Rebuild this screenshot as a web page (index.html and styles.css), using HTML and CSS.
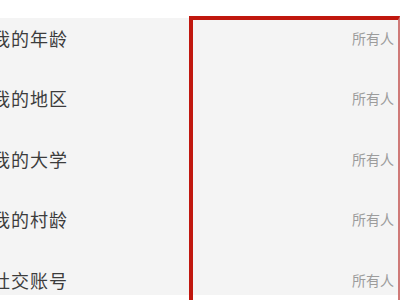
FILE: index.html
```html
<!DOCTYPE html>
<html lang="zh">
<head>
<meta charset="utf-8">
<link rel="stylesheet" href="styles.css">
</head>
<body>
<div class="panel">
  <ul class="list">
    <li class="row"><span class="label">我的年龄</span><span class="value">所有人</span></li>
    <li class="row"><span class="label">我的地区</span><span class="value">所有人</span></li>
    <li class="row"><span class="label">我的大学</span><span class="value">所有人</span></li>
    <li class="row"><span class="label">我的村龄</span><span class="value">所有人</span></li>
    <li class="row"><span class="label">社交账号</span><span class="value">所有人</span></li>
  </ul>
</div>
<div class="highlight"></div>
</body>
</html>
```

FILE: styles.css
```css
html, body {
  margin: 0;
  padding: 0;
  background: #ffffff;
  width: 400px;
  height: 300px;
  overflow: hidden;
}
body {
  font-family: "Noto Sans CJK SC", "Noto Sans", sans-serif;
  position: relative;
}
.panel {
  margin-top: 18px;
  height: 277px;
  background: #f4f4f4;
  overflow: hidden;
}
.list {
  list-style: none;
  margin: 0;
  padding: 9.5px 0 0 0;
  display: flex;
  flex-direction: column;
  gap: 40.5px;
}
.row {
  height: 20px;
  display: flex;
  align-items: center;
  justify-content: space-between;
}
.label {
  margin-left: -8px;
  font-size: 18px;
  letter-spacing: 1px;
  color: #3c3c3c;
  line-height: 20px;
}
.value {
  margin-right: 6px;
  font-size: 14px;
  color: #9c9c9c;
  line-height: 20px;
}
.highlight {
  position: absolute;
  left: 189px;
  top: 16px;
  right: 0;
  bottom: -10px;
  border-left: 4px solid #c0170e;
  border-top: 4px solid #c0170e;
  border-right: 2px solid #cf7a78;
}
```
